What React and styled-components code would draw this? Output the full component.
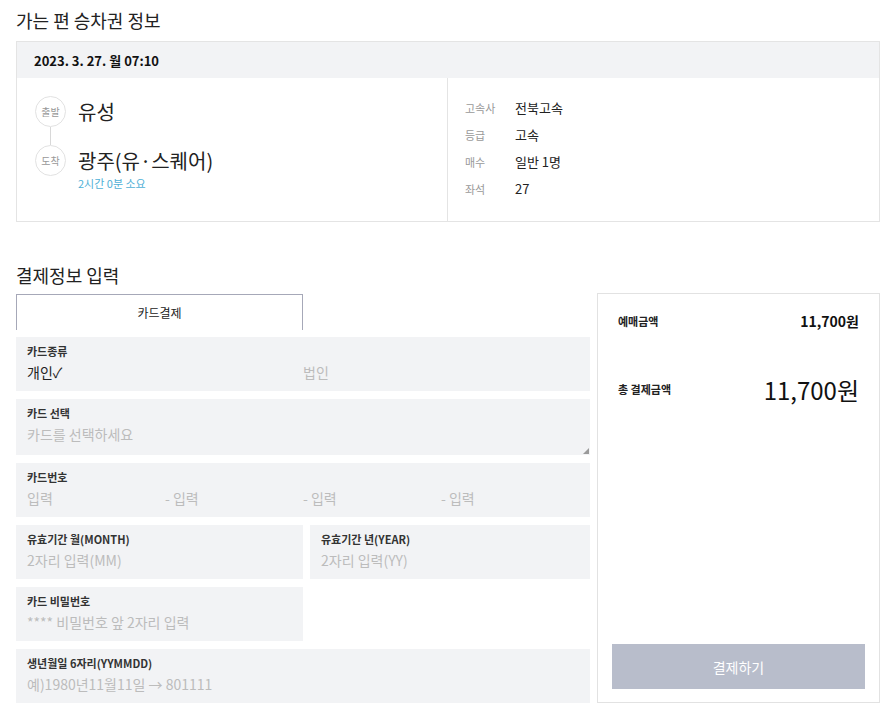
import React from 'react';
import styled, { createGlobalStyle } from 'styled-components';

const GlobalStyle = createGlobalStyle`
  body {
    margin: 0;
    background: #fff;
    font-family: "Noto Sans CJK KR", "Noto Sans", sans-serif;
    color: #222;
  }
`;

const Page = styled.div`
  width: 864px;
  padding: 8px 11px 12px 16px;
`;

const SectionTitle = styled.h2`
  margin: ${(p) => (p.$top ? `${p.$top}px` : '0')} 0 ${(p) => p.$bottom || 0}px;
  font-size: 18px;
  font-weight: 400;
  line-height: 24px;
  color: #222;
`;

/* ticket summary */
const TicketBox = styled.div`
  border: 1px solid #e4e4e4;
`;

const TicketHeader = styled.div`
  height: 36px;
  display: flex;
  align-items: center;
  padding-left: 17px;
  background: #f2f3f5;
  font-size: 13px;
  font-weight: 700;
  color: #111;
`;

const TicketBody = styled.div`
  display: grid;
  grid-template-columns: 431px 1fr;
  height: 143px;
`;

const RouteCol = styled.div`
  padding: 18px 0 0 18px;
  border-right: 1px solid #e4e4e4;
`;

const Stop = styled.div`
  display: flex;
  align-items: center;
  gap: 12px;
`;

const StopBadge = styled.div`
  width: 29px;
  height: 29px;
  border: 1px solid #e2e2e2;
  border-radius: 50%;
  display: flex;
  align-items: center;
  justify-content: center;
  font-size: 10px;
  color: #999;
  flex-shrink: 0;
`;

const Connector = styled.div`
  width: 1px;
  height: 18px;
  margin-left: 15px;
  background: #d8d8d8;
`;

const Place = styled.div`
  font-size: 20px;
  line-height: 28px;
  color: #222;
`;

const Duration = styled.div`
  margin: 0 0 0 43px;
  font-size: 11px;
  line-height: 14px;
  color: #4fb0d6;
`;

const InfoCol = styled.div`
  padding: 16px 0 0 17px;
`;

const InfoRow = styled.div`
  display: flex;
  align-items: center;
  height: 27px;
`;

const InfoLabel = styled.span`
  width: 50px;
  font-size: 11px;
  color: #999;
`;

const InfoValue = styled.span`
  font-size: 13px;
  color: #222;
`;

/* payment */
const PayGrid = styled.div`
  display: grid;
  grid-template-columns: 574px 1fr;
  gap: 7px;
`;

const FormCol = styled.div`
  display: flex;
  flex-direction: column;
`;

const Tab = styled.div`
  width: 285px;
  height: 35px;
  border: 1px solid #a6a8b8;
  border-bottom: none;
  display: flex;
  align-items: center;
  justify-content: center;
  font-size: 12px;
  color: #222;
  margin-bottom: 7px;
`;

const Fields = styled.div`
  display: grid;
  grid-template-columns: 287px 280px;
  column-gap: 7px;
  row-gap: 8px;
`;

const Field = styled.div`
  position: relative;
  grid-column: ${(p) => (p.$wide ? '1 / -1' : 'auto')};
  height: ${(p) => p.$height || 54}px;
  box-sizing: border-box;
  padding: 6px 11px 0;
  background: #f2f3f5;
`;

const FieldLabel = styled.div`
  font-size: 11px;
  font-weight: 700;
  line-height: 16px;
  color: #333;
`;

const FieldRow = styled.div`
  display: grid;
  grid-template-columns: repeat(${(p) => p.$cols || 1}, 1fr);
  font-size: 14px;
  line-height: 26px;
`;

const Placeholder = styled.span`
  color: ${(p) => (p.$filled ? '#222' : '#bcbcbc')};
`;

const ResizeGrip = styled.span`
  position: absolute;
  right: 1px;
  bottom: 1px;
  width: 0;
  height: 0;
  border-left: 6px solid transparent;
  border-bottom: 6px solid #9a9a9a;
`;

const SummaryPanel = styled.div`
  border: 1px solid #e2e2e2;
  margin-top: -1px;
  padding: 0 14px 13px;
  display: flex;
  flex-direction: column;
`;

const SumRow = styled.div`
  display: flex;
  justify-content: space-between;
  align-items: center;
  padding: 0 6px;
  margin-top: ${(p) => p.$top}px;
  height: ${(p) => p.$height}px;
`;

const SumLabel = styled.span`
  font-size: 11px;
  font-weight: 700;
  color: #222;
`;

const SumValue = styled.span`
  font-size: ${(p) => (p.$big ? 24 : 14)}px;
  font-weight: ${(p) => (p.$big ? 400 : 700)};
  color: #111;
`;

const PayButton = styled.button`
  margin-top: auto;
  height: 45px;
  border: none;
  background: #b8bdcb;
  color: #fff;
  font-family: inherit;
  font-size: 14px;
`;

export default function App() {
  return (
    <Page>
      <GlobalStyle />
      <SectionTitle $bottom={9}>가는 편 승차권 정보</SectionTitle>
      <TicketBox>
        <TicketHeader>2023. 3. 27. 월 07:10</TicketHeader>
        <TicketBody>
          <RouteCol>
            <Stop>
              <StopBadge>출발</StopBadge>
              <Place>유성</Place>
            </Stop>
            <Connector />
            <Stop>
              <StopBadge>도착</StopBadge>
              <Place>광주(유·스퀘어)</Place>
            </Stop>
            <Duration>2시간 0분 소요</Duration>
          </RouteCol>
          <InfoCol>
            <InfoRow><InfoLabel>고속사</InfoLabel><InfoValue>전북고속</InfoValue></InfoRow>
            <InfoRow><InfoLabel>등급</InfoLabel><InfoValue>고속</InfoValue></InfoRow>
            <InfoRow><InfoLabel>매수</InfoLabel><InfoValue>일반 1명</InfoValue></InfoRow>
            <InfoRow><InfoLabel>좌석</InfoLabel><InfoValue>27</InfoValue></InfoRow>
          </InfoCol>
        </TicketBody>
      </TicketBox>

      <SectionTitle $top={41} $bottom={7}>결제정보 입력</SectionTitle>
      <PayGrid>
        <FormCol>
          <Tab>카드결제</Tab>
          <Fields>
            <Field $wide>
              <FieldLabel>카드종류</FieldLabel>
              <FieldRow $cols={2}>
                <Placeholder $filled>개인✓</Placeholder>
                <Placeholder>법인</Placeholder>
              </FieldRow>
            </Field>
            <Field $wide $height={56}>
              <FieldLabel>카드 선택</FieldLabel>
              <FieldRow><Placeholder>카드를 선택하세요</Placeholder></FieldRow>
              <ResizeGrip />
            </Field>
            <Field $wide>
              <FieldLabel>카드번호</FieldLabel>
              <FieldRow $cols={4}>
                <Placeholder>입력</Placeholder>
                <Placeholder>- 입력</Placeholder>
                <Placeholder>- 입력</Placeholder>
                <Placeholder>- 입력</Placeholder>
              </FieldRow>
            </Field>
            <Field>
              <FieldLabel>유효기간 월(MONTH)</FieldLabel>
              <FieldRow><Placeholder>2자리 입력(MM)</Placeholder></FieldRow>
            </Field>
            <Field>
              <FieldLabel>유효기간 년(YEAR)</FieldLabel>
              <FieldRow><Placeholder>2자리 입력(YY)</Placeholder></FieldRow>
            </Field>
            <Field>
              <FieldLabel>카드 비밀번호</FieldLabel>
              <FieldRow><Placeholder>**** 비밀번호 앞 2자리 입력</Placeholder></FieldRow>
            </Field>
            <Field $wide>
              <FieldLabel>생년월일 6자리(YYMMDD)</FieldLabel>
              <FieldRow><Placeholder>예)1980년11월11일 → 801111</Placeholder></FieldRow>
            </Field>
          </Fields>
        </FormCol>
        <SummaryPanel>
          <SumRow $top={15} $height={24}>
            <SumLabel>예매금액</SumLabel>
            <SumValue>11,700원</SumValue>
          </SumRow>
          <SumRow $top={39} $height={34}>
            <SumLabel>총 결제금액</SumLabel>
            <SumValue $big>11,700원</SumValue>
          </SumRow>
          <PayButton>결제하기</PayButton>
        </SummaryPanel>
      </PayGrid>
    </Page>
  );
}
